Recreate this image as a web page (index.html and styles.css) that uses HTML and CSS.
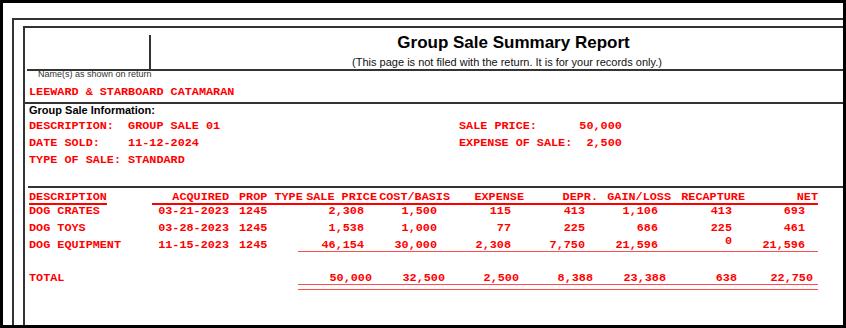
FILE: index.html
```html
<!DOCTYPE html>
<html lang="en">
<head>
<meta charset="utf-8">
<title>Group Sale Summary Report</title>
<link rel="stylesheet" href="styles.css">
</head>
<body>
<div class="screen">
  <div class="page">
    <div class="form">
      <header class="head">
        <div class="head-left"></div>
        <div class="head-title">
          <h1>Group Sale Summary Report</h1>
          <p class="note">(This page is not filed with the return. It is for your records only.)</p>
        </div>
      </header>

      <div class="name">
        <div class="name-label">Name(s) as shown on return</div>
        <div class="name-value mono">LEEWARD &amp; STARBOARD CATAMARAN</div>
      </div>

      <section class="info">
        <h2>Group Sale Information:</h2>
        <div class="info-grid mono">
          <div class="info-col">
            <div class="line">DESCRIPTION:  GROUP SALE 01</div>
            <div class="line">DATE SOLD:    11-12-2024</div>
            <div class="line">TYPE OF SALE: STANDARD</div>
          </div>
          <div class="info-col">
            <div class="line">SALE PRICE:      50,000</div>
            <div class="line">EXPENSE OF SALE:  2,500</div>
          </div>
        </div>
      </section>

      <section class="table mono">
        <div class="grid thead">
          <div class="th th-desc"><span>DESCRIPTION</span></div>
          <div class="th">ACQUIRED</div>
          <div class="th left prop">PROP TYPE</div>
          <div class="th">SALE PRICE</div>
          <div class="th">COST/BASIS</div>
          <div class="th">EXPENSE</div>
          <div class="th">DEPR.</div>
          <div class="th">GAIN/LOSS</div>
          <div class="th">RECAPTURE</div>
          <div class="th">NET</div>
        </div>

        <div class="rows">
          <div class="grid tr">
            <div class="left">DOG CRATES</div>
            <div class="date">03-21-2023</div>
            <div class="left prop">1245</div>
            <div class="num">2,308</div>
            <div class="num">1,500</div>
            <div class="num">115</div>
            <div class="num">413</div>
            <div class="num">1,106</div>
            <div class="num">413</div>
            <div class="num">693</div>
          </div>
          <div class="grid tr">
            <div class="left">DOG TOYS</div>
            <div class="date">03-28-2023</div>
            <div class="left prop">1245</div>
            <div class="num">1,538</div>
            <div class="num">1,000</div>
            <div class="num">77</div>
            <div class="num">225</div>
            <div class="num">686</div>
            <div class="num">225</div>
            <div class="num">461</div>
          </div>
          <div class="grid tr">
            <div class="left">DOG EQUIPMENT</div>
            <div class="date">11-15-2023</div>
            <div class="left prop">1245</div>
            <div class="num">46,154</div>
            <div class="num">30,000</div>
            <div class="num">2,308</div>
            <div class="num">7,750</div>
            <div class="num">21,596</div>
            <div class="num"><span class="raised">0</span></div>
            <div class="num">21,596</div>
          </div>
        </div>
        <div class="rule-single"></div>

        <div class="grid total">
          <div class="left">TOTAL</div>
          <div></div>
          <div></div>
          <div class="tot">50,000</div>
          <div class="tot">32,500</div>
          <div class="tot">2,500</div>
          <div class="tot">8,388</div>
          <div class="tot">23,388</div>
          <div class="tot tot-recap">638</div>
          <div class="tot">22,750</div>
        </div>
        <div class="rule-double"></div>
      </section>
    </div>
  </div>
</div>
</body>
</html>
```
FILE: styles.css
```css
* {
  box-sizing: border-box;
  margin: 0;
  padding: 0;
}

html,
body {
  background: #000;
}

body {
  width: 846px;
  height: 328px;
  overflow: hidden;
  font-family: "Liberation Sans", Arial, sans-serif;
  color: #000;
}

.screen {
  margin: 3px;
  width: 840px;
  height: 322px;
  background: #fff;
  overflow: hidden;
}

.page {
  margin: 15px 0 0 9px;
  width: 900px;
  height: 400px;
  border-top: 2px solid #333;
  border-left: 2px solid #333;
  padding: 6px 0 0 9px;
}

.form {
  width: 853px;
  height: 400px;
  border-top: 2px solid #333;
  border-left: 2px solid #333;
}

/* header */
.head {
  display: flex;
  height: 43px;
  margin-left: 2px;
  border-bottom: 2px solid #333;
}

.head-left {
  width: 124px;
  margin-top: 7px;
  border-right: 2px solid #333;
}

.head-title {
  flex: 1;
  text-align: center;
  padding-top: 5px;
}

.head-title h1 {
  font-size: 17px;
  line-height: 19px;
  font-weight: 700;
}

.note {
  font-size: 11px;
  line-height: 12px;
  margin-top: 4px;
  padding-right: 13px;
  color: #111;
}

/* name */
.mono {
  font-family: "Liberation Mono", "Courier New", monospace;
  font-weight: 700;
  font-size: 11.8px;
  color: #ff0000;
}

.name {
  border-bottom: 2px solid #333;
  padding-bottom: 1px;
}

.name-label {
  font-size: 9px;
  line-height: 6px;
  padding-left: 13px;
  color: #333;
}

.name-value {
  margin-top: 7px;
  line-height: 17px;
  padding-left: 4px;
  white-space: pre;
}

/* info */
.info {
  padding-bottom: 17px;
}

.info h2 {
  font-size: 11px;
  line-height: 13px;
  font-weight: 700;
  padding-left: 4px;
}

.info-grid {
  display: grid;
  grid-template-columns: 430px auto;
  margin-top: 1px;
  padding-left: 4px;
}

.line {
  line-height: 17px;
  height: 17px;
  white-space: pre;
}

/* table */
.table {
  margin-left: 3px;
  border-top: 2px solid #333;
  padding: 3px 0 0 1px;
}

.grid {
  display: grid;
  grid-template-columns: 123px 77px 77px 71px 73px 74px 74px 73px 74px 73px;
  text-align: right;
  white-space: pre;
}

.grid .left {
  text-align: left;
}

.grid .prop {
  padding-left: 10px;
}

.thead .th {
  line-height: 12px;
  height: 14px;
  border-bottom: 2px solid #ff0000;
}

.thead .th-desc {
  border-bottom: none;
  text-align: left;
}

.th-desc span {
  display: block;
  width: max-content;
  border-bottom: 2px solid #ff0000;
}

.rows {
  display: grid;
  row-gap: 5px;
}

.tr {
  height: 12px;
  line-height: 12px;
}

.tr .num {
  padding-right: 13px;
}

.raised {
  vertical-align: 4px;
  line-height: 0;
}

.rule-single {
  margin-left: 269px;
  width: 520px;
  border-top: 1px solid #ff4d4d;
}

.total {
  margin-top: 21px;
  height: 11px;
  line-height: 11px;
}

.total .tot {
  padding-right: 5px;
}

.total .tot-recap {
  padding-right: 8px;
}

.rule-double {
  margin-left: 269px;
  width: 520px;
  height: 6px;
  border-top: 1px solid #ff4d4d;
  border-bottom: 1px solid #ff4d4d;
}
```
